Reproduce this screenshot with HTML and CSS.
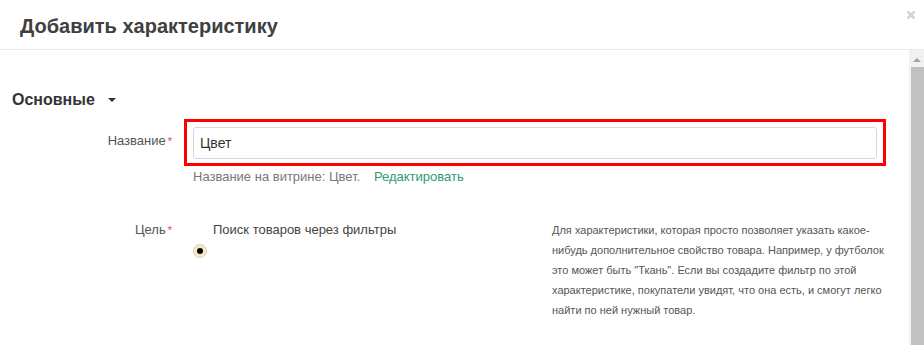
FILE: index.html
```html
<!DOCTYPE html>
<html lang="ru">
  <head>
    <meta charset="UTF-8" />
    <meta name="viewport" content="width=device-width, initial-scale=1.0" />
    <title>Добавить характеристику</title>
    <link rel="stylesheet" href="styles.css">
  </head>
  <body>
    <div class="dialog">
      <div class="dialog_header">
        <h1>Добавить характеристику</h1>
        <button class="close_btn" aria-label="Закрыть">
          <svg width="10" height="10" viewBox="0 0 10 10">
            <path d="M1.5 1.5 L8.5 8.5 M8.5 1.5 L1.5 8.5" stroke="#d4d4d4" stroke-width="2.6" />
          </svg>
        </button>
      </div>

      <div class="dialog_body">
        <div class="dialog_content">
          <h2 class="section_title">Основные <span class="caret"></span></h2>

          <div class="field_row">
            <label class="field_label" for="name">Название<span class="req">*</span></label>
            <div class="field_value">
              <div class="highlight">
                <input id="name" class="text_input" type="text" value="Цвет">
              </div>
              <p class="hint">Название на витрине: Цвет. <a href="#" class="edit_link">Редактировать</a></p>
            </div>
          </div>

          <div class="field_row goal_row">
            <div class="field_label">Цель<span class="req">*</span></div>
            <div class="field_value">
              <p class="option_text">Поиск товаров через фильтры</p>
              <span class="radio"><span class="radio_dot"></span></span>
            </div>
            <p class="description">
              Для характеристики, которая просто позволяет указать какое-<br>
              нибудь дополнительное свойство товара. Например, у футболок<br>
              это может быть "Ткань". Если вы создадите фильтр по этой<br>
              характеристике, покупатели увидят, что она есть, и смогут легко<br>
              найти по ней нужный товар.
            </p>
          </div>
        </div>

        <div class="scrollbar">
          <span class="scroll_arrow"></span>
          <div class="scroll_thumb"></div>
        </div>
      </div>
    </div>
  </body>
</html>
```

FILE: styles.css
```css
body {
  margin: 0;
  padding: 0;
  background: white;
  font-family: "Liberation Sans", Arial, sans-serif;
  color: #333;
}
.dialog {
  width: 924px;
  height: 345px;
  overflow: hidden;
  display: flex;
  flex-direction: column;
}
.dialog_header {
  height: 49px;
  border-bottom: 1px solid #e8e8e8;
  display: flex;
  justify-content: space-between;
  align-items: flex-start;
  padding: 0 8px 0 20px;
}
.dialog_header h1 {
  margin: 14px 0 0 0;
  font-size: 20px;
  line-height: 24px;
  font-weight: bold;
  color: #404040;
}
.close_btn {
  border: none;
  background: none;
  padding: 0;
  margin-top: 10px;
  width: 10px;
  height: 10px;
  cursor: pointer;
}
.close_btn svg {
  display: block;
}
.dialog_body {
  flex: 1;
  display: flex;
}
.dialog_content {
  flex: 1;
  padding: 40px 22px 0 12px;
}
.section_title {
  margin: 0;
  font-size: 16px;
  line-height: 20px;
  font-weight: bold;
  color: #333;
  display: flex;
  align-items: center;
}
.caret {
  margin-left: 13px;
  width: 0;
  height: 0;
  border-left: 4px solid transparent;
  border-right: 4px solid transparent;
  border-top: 4px solid #333;
}
.field_row {
  display: grid;
  grid-template-columns: 160px 684px;
  column-gap: 21px;
  margin-top: 17px;
}
.field_label {
  text-align: right;
  font-size: 13px;
  line-height: 18px;
  color: #555;
  padding-top: 5px;
}
.req {
  color: #e8413c;
  font-size: 11px;
  line-height: 0;
  margin-left: 2px;
}
.highlight {
  border: 3px solid #f00;
  padding: 5px 6px 4px 6px;
  margin: -8px -9px -7px -9px;
}
.text_input {
  display: block;
  box-sizing: border-box;
  width: 684px;
  height: 32px;
  border: 1px solid #d3d8df;
  border-radius: 3px;
  padding: 0 6px;
  font-family: inherit;
  font-size: 14px;
  color: #333;
  background: white;
}
.hint {
  margin: 9px 0 0 0;
  font-size: 13px;
  line-height: 18px;
  color: #777;
}
.edit_link {
  margin-left: 10px;
  color: #2e9a74;
  text-decoration: none;
}
.goal_row {
  grid-template-columns: 160px 338px 1fr;
  margin-top: 30px;
}
.option_text {
  margin: 0;
  padding-left: 20px;
  font-size: 13px;
  line-height: 18px;
  color: #444;
  padding-top: 5px;
}
.radio {
  margin-top: 5px;
  width: 12px;
  height: 12px;
  border: 1px solid #dccfae;
  border-radius: 50%;
  background: #f6e9cb;
  display: flex;
  align-items: center;
  justify-content: center;
}
.radio_dot {
  width: 6px;
  height: 6px;
  border-radius: 50%;
  background: black;
}
.description {
  margin: 4px 0 0 0;
  font-size: 11px;
  line-height: 20px;
  color: #555;
  white-space: nowrap;
}
.scrollbar {
  width: 15px;
  background: #f1f1f1;
  display: flex;
  flex-direction: column;
  align-items: flex-end;
}
.scroll_arrow {
  align-self: center;
  margin-top: 8px;
  width: 0;
  height: 0;
  border-left: 4px solid transparent;
  border-right: 4px solid transparent;
  border-bottom: 4px solid #a3a3a3;
}
.scroll_thumb {
  margin-top: 5px;
  width: 13px;
  flex: 1;
  background: #c1c1c1;
}
```
